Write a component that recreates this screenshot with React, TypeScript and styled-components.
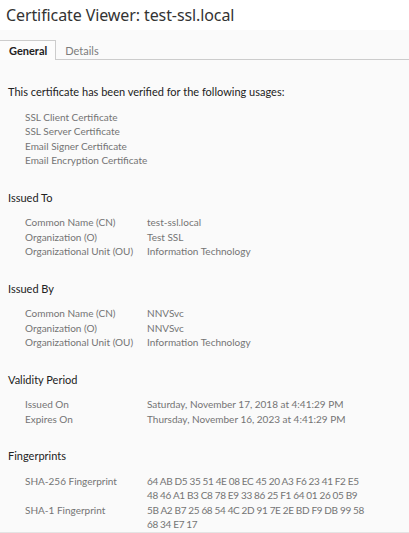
import React from "react";
import styled, { createGlobalStyle } from "styled-components";

const Global = createGlobalStyle`
  html, body { margin: 0; padding: 0; background: #fafafa; }
  body { font-family: Lato, "Noto Sans", sans-serif; }
`;

const Page = styled.div`
  width: 409px;
  height: 533px;
  overflow: hidden;
  background: #fafafa;
  display: flex;
  flex-direction: column;
  border-bottom: 1px solid #e4e4e4;
  box-sizing: border-box;
`;

const Header = styled.div`
  height: 30px;
  background: #ffffff;
  display: flex;
  align-items: center;
  padding-left: 6px;
  flex-shrink: 0;
`;

const Title = styled.h1`
  margin: 0;
  font-family: "Noto Sans", sans-serif;
  font-size: 16px;
  font-weight: 400;
  color: #333;
  letter-spacing: -0.1px;
`;

const TabBar = styled.div`
  margin-top: 10px;
  display: flex;
  border-bottom: 1px solid #cccccc;
  height: 19px;
  flex-shrink: 0;
`;

const Tab = styled.div<{ $active?: boolean }>`
  box-sizing: border-box;
  height: 20px;
  padding: 0 8px 0 9px;
  display: flex;
  align-items: center;
  font-size: 11px;
  font-weight: ${(p) => (p.$active ? 700 : 400)};
  color: ${(p) => (p.$active ? "#222" : "#7c7c7c")};
  background: ${(p) => (p.$active ? "#fcfcfc" : "transparent")};
  border: 1px solid ${(p) => (p.$active ? "#cccccc" : "transparent")};
  border-bottom: none;
  border-left: none;
  margin-bottom: -1px;
`;

const Content = styled.div`
  padding: 25px 8px 0 8px;
  display: flex;
  flex-direction: column;
`;

const Section = styled.section`
  display: flex;
  flex-direction: column;
  margin-bottom: 23px;
`;

const Heading = styled.div`
  font-size: 11px;
  color: #222;
  line-height: 14.5px;
  margin-bottom: 10px;
  white-space: nowrap;
`;

const List = styled.div`
  padding-left: 17px;
  display: flex;
  flex-direction: column;
`;

const Item = styled.div`
  font-size: 10px;
  color: #747474;
  line-height: 14.5px;
`;

const Grid = styled.div`
  padding-left: 17px;
  display: grid;
  grid-template-columns: 122px 1fr;
  font-size: 10px;
  color: #747474;
  line-height: 14.5px;
`;

const Label = styled.div`
  white-space: nowrap;
`;

const Value = styled.div<{ $tight?: boolean }>`
  display: flex;
  flex-direction: column;
  white-space: nowrap;
  letter-spacing: ${(p) => (p.$tight ? "-0.35px" : "0")};
`;

type Row = [string, string[], boolean?];

const sections: { title: string; rows: Row[] }[] = [
  {
    title: "Issued To",
    rows: [
      ["Common Name (CN)", ["test-ssl.local"]],
      ["Organization (O)", ["Test SSL"]],
      ["Organizational Unit (OU)", ["Information Technology"]],
    ],
  },
  {
    title: "Issued By",
    rows: [
      ["Common Name (CN)", ["NNVSvc"]],
      ["Organization (O)", ["NNVSvc"]],
      ["Organizational Unit (OU)", ["Information Technology"]],
    ],
  },
  {
    title: "Validity Period",
    rows: [
      ["Issued On", ["Saturday, November 17, 2018 at 4:41:29 PM"]],
      ["Expires On", ["Thursday, November 16, 2023 at 4:41:29 PM"]],
    ],
  },
  {
    title: "Fingerprints",
    rows: [
      [
        "SHA-256 Fingerprint",
        [
          "64 AB D5 35 51 4E 08 EC 45 20 A3 F6 23 41 F2 E5",
          "48 46 A1 B3 C8 78 E9 33 86 25 F1 64 01 26 05 B9",
        ],
        true,
      ],
      [
        "SHA-1 Fingerprint",
        ["5B A2 B7 25 68 54 4C 2D 91 7E 2E BD F9 DB 99 58", "68 34 E7 17"],
        true,
      ],
    ],
  },
];

export default function App() {
  return (
    <>
      <Global />
      <Page>
        <Header>
          <Title>Certificate Viewer: test-ssl.local</Title>
        </Header>
        <TabBar>
          <Tab $active>General</Tab>
          <Tab>Details</Tab>
        </TabBar>
        <Content>
          <Section>
            <Heading>This certificate has been verified for the following usages:</Heading>
            <List>
              <Item>SSL Client Certificate</Item>
              <Item>SSL Server Certificate</Item>
              <Item>Email Signer Certificate</Item>
              <Item>Email Encryption Certificate</Item>
            </List>
          </Section>
          {sections.map((s) => (
            <Section key={s.title}>
              <Heading>{s.title}</Heading>
              <Grid>
                {s.rows.map(([label, lines, tight]) => (
                  <React.Fragment key={label}>
                    <Label>{label}</Label>
                    <Value $tight={tight}>
                      {lines.map((l) => (
                        <span key={l}>{l}</span>
                      ))}
                    </Value>
                  </React.Fragment>
                ))}
              </Grid>
            </Section>
          ))}
        </Content>
      </Page>
    </>
  );
}
